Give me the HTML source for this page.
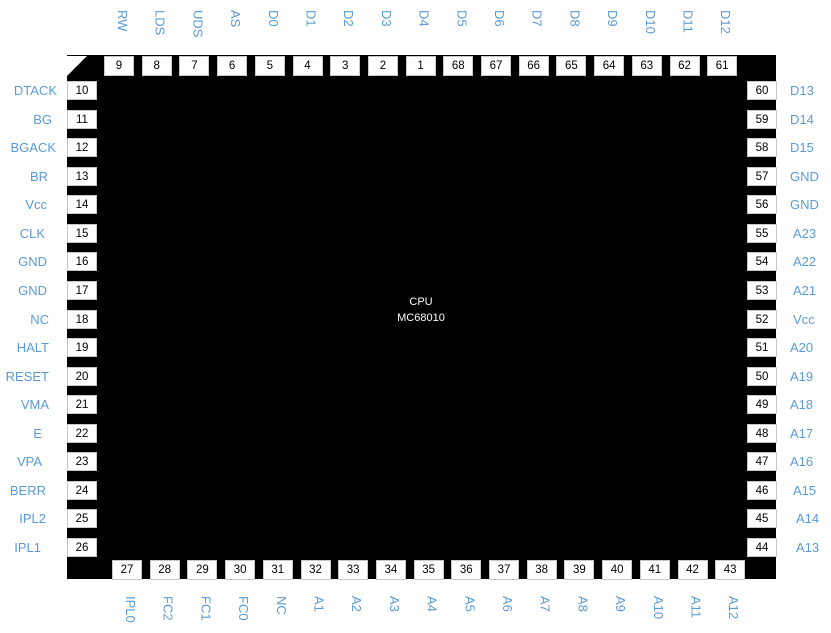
<!DOCTYPE html>
<html><head><meta charset="utf-8"><style>
body{margin:0;width:831px;height:633px;background:#fff;position:relative;overflow:hidden;font-family:"Liberation Sans",sans-serif}
.chip{position:absolute;left:67px;top:55px;width:709px;height:524px;background:#000}
.p{position:absolute;background:#fff;border:1px solid #c8c8c8;box-sizing:border-box;font-size:11.5px;color:#000;text-align:center;line-height:18px}
.t{width:30px;height:20px;top:56px;line-height:19px}
.b{width:30px;height:20px;top:560px;line-height:19px}
.l{width:30px;height:19px;left:67px}
.r{width:30px;height:19px;left:747px}
.lab{position:absolute;color:#5b9bd5;font-size:13px}
.v{writing-mode:vertical-rl;width:20px;text-align:left}
.vt{top:10px}.vb{top:596px}
.ll{left:0;text-align:right;line-height:19px}
.rl{line-height:19px;white-space:nowrap}
</style></head><body>
<div class="chip"></div>
<svg style="position:absolute;left:67px;top:56px" width="20" height="20"><polygon points="0,0 20,0 0,20" fill="#fff"/></svg>
<div class="p t" style="left:104px">9</div><div class="p t" style="left:141.7px">8</div><div class="p t" style="left:179.4px">7</div><div class="p t" style="left:217.1px">6</div><div class="p t" style="left:254.8px">5</div><div class="p t" style="left:292.5px">4</div><div class="p t" style="left:330.2px">3</div><div class="p t" style="left:367.9px">2</div><div class="p t" style="left:405.6px">1</div><div class="p t" style="left:443.3px">68</div><div class="p t" style="left:481px">67</div><div class="p t" style="left:518.7px">66</div><div class="p t" style="left:556.4px">65</div><div class="p t" style="left:594.1px">64</div><div class="p t" style="left:631.8px">63</div><div class="p t" style="left:669.5px">62</div><div class="p t" style="left:707.2px">61</div>
<div class="p b" style="left:112px">27</div><div class="p b" style="left:149.7px">28</div><div class="p b" style="left:187.4px">29</div><div class="p b" style="left:225.1px">30</div><div class="p b" style="left:262.8px">31</div><div class="p b" style="left:300.5px">32</div><div class="p b" style="left:338.2px">33</div><div class="p b" style="left:375.9px">34</div><div class="p b" style="left:413.6px">35</div><div class="p b" style="left:451.3px">36</div><div class="p b" style="left:489px">37</div><div class="p b" style="left:526.7px">38</div><div class="p b" style="left:564.4px">39</div><div class="p b" style="left:602.1px">40</div><div class="p b" style="left:639.8px">41</div><div class="p b" style="left:677.5px">42</div><div class="p b" style="left:715.2px">43</div>
<div class="p l" style="top:81px">10</div><div class="p l" style="top:109.6px">11</div><div class="p l" style="top:138.1px">12</div><div class="p l" style="top:166.7px">13</div><div class="p l" style="top:195.2px">14</div><div class="p l" style="top:223.8px">15</div><div class="p l" style="top:252.4px">16</div><div class="p l" style="top:280.9px">17</div><div class="p l" style="top:309.5px">18</div><div class="p l" style="top:338px">19</div><div class="p l" style="top:366.6px">20</div><div class="p l" style="top:395.2px">21</div><div class="p l" style="top:423.7px">22</div><div class="p l" style="top:452.3px">23</div><div class="p l" style="top:480.8px">24</div><div class="p l" style="top:509.4px">25</div><div class="p l" style="top:538px">26</div>
<div class="p r" style="top:81px">60</div><div class="p r" style="top:109.6px">59</div><div class="p r" style="top:138.1px">58</div><div class="p r" style="top:166.7px">57</div><div class="p r" style="top:195.2px">56</div><div class="p r" style="top:223.8px">55</div><div class="p r" style="top:252.4px">54</div><div class="p r" style="top:280.9px">53</div><div class="p r" style="top:309.5px">52</div><div class="p r" style="top:338px">51</div><div class="p r" style="top:366.6px">50</div><div class="p r" style="top:395.2px">49</div><div class="p r" style="top:423.7px">48</div><div class="p r" style="top:452.3px">47</div><div class="p r" style="top:480.8px">46</div><div class="p r" style="top:509.4px">45</div><div class="p r" style="top:538px">44</div>
<div class="lab v vt" style="left:110px">RW</div><div class="lab v vt" style="left:147.7px">LDS</div><div class="lab v vt" style="left:185.4px">UDS</div><div class="lab v vt" style="left:223.1px">AS</div><div class="lab v vt" style="left:260.8px">D0</div><div class="lab v vt" style="left:298.5px">D1</div><div class="lab v vt" style="left:336.2px">D2</div><div class="lab v vt" style="left:373.9px">D3</div><div class="lab v vt" style="left:411.6px">D4</div><div class="lab v vt" style="left:449.3px">D5</div><div class="lab v vt" style="left:487px">D6</div><div class="lab v vt" style="left:524.7px">D7</div><div class="lab v vt" style="left:562.4px">D8</div><div class="lab v vt" style="left:600.1px">D9</div><div class="lab v vt" style="left:637.8px">D10</div><div class="lab v vt" style="left:675.5px">D11</div><div class="lab v vt" style="left:713.2px">D12</div>
<div class="lab v vb" style="left:118px">IPL0</div><div class="lab v vb" style="left:155.7px">FC2</div><div class="lab v vb" style="left:193.4px">FC1</div><div class="lab v vb" style="left:231.1px">FC0</div><div class="lab v vb" style="left:268.8px">NC</div><div class="lab v vb" style="left:306.5px">A1</div><div class="lab v vb" style="left:344.2px">A2</div><div class="lab v vb" style="left:381.9px">A3</div><div class="lab v vb" style="left:419.6px">A4</div><div class="lab v vb" style="left:457.3px">A5</div><div class="lab v vb" style="left:495px">A6</div><div class="lab v vb" style="left:532.7px">A7</div><div class="lab v vb" style="left:570.4px">A8</div><div class="lab v vb" style="left:608.1px">A9</div><div class="lab v vb" style="left:645.8px">A10</div><div class="lab v vb" style="left:683.5px">A11</div><div class="lab v vb" style="left:721.2px">A12</div>
<div class="lab ll" style="top:81px;width:57px">DTACK</div><div class="lab ll" style="top:109.6px;width:52px">BG</div><div class="lab ll" style="top:138.1px;width:56px">BGACK</div><div class="lab ll" style="top:166.7px;width:48px">BR</div><div class="lab ll" style="top:195.2px;width:47px">Vcc</div><div class="lab ll" style="top:223.8px;width:45px">CLK</div><div class="lab ll" style="top:252.4px;width:47px">GND</div><div class="lab ll" style="top:280.9px;width:47px">GND</div><div class="lab ll" style="top:309.5px;width:49px">NC</div><div class="lab ll" style="top:338px;width:49px">HALT</div><div class="lab ll" style="top:366.6px;width:49px">RESET</div><div class="lab ll" style="top:395.2px;width:49px">VMA</div><div class="lab ll" style="top:423.7px;width:42px">E</div><div class="lab ll" style="top:452.3px;width:42px">VPA</div><div class="lab ll" style="top:480.8px;width:46px">BERR</div><div class="lab ll" style="top:509.4px;width:46px">IPL2</div><div class="lab ll" style="top:538px;width:41px">IPL1</div>
<div class="lab rl" style="top:81px;left:790px">D13</div><div class="lab rl" style="top:109.6px;left:790px">D14</div><div class="lab rl" style="top:138.1px;left:790px">D15</div><div class="lab rl" style="top:166.7px;left:790px">GND</div><div class="lab rl" style="top:195.2px;left:790px">GND</div><div class="lab rl" style="top:223.8px;left:793px">A23</div><div class="lab rl" style="top:252.4px;left:793px">A22</div><div class="lab rl" style="top:280.9px;left:793px">A21</div><div class="lab rl" style="top:309.5px;left:793px">Vcc</div><div class="lab rl" style="top:338px;left:790px">A20</div><div class="lab rl" style="top:366.6px;left:790px">A19</div><div class="lab rl" style="top:395.2px;left:790px">A18</div><div class="lab rl" style="top:423.7px;left:790px">A17</div><div class="lab rl" style="top:452.3px;left:790px">A16</div><div class="lab rl" style="top:480.8px;left:793px">A15</div><div class="lab rl" style="top:509.4px;left:796px">A14</div><div class="lab rl" style="top:538px;left:796px">A13</div>
<div style="position:absolute;left:380px;top:294px;width:82px;text-align:center;color:#fff;font-size:11px;line-height:16px">CPU<br>MC68010</div>
</body></html>
